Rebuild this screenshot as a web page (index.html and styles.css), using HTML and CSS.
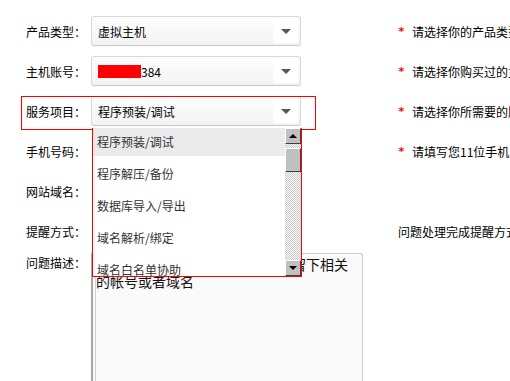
FILE: index.html
```html
<!DOCTYPE html>
<html lang="zh-CN">
  <head>
    <meta charset="UTF-8" />
    <meta name="viewport" content="width=device-width, initial-scale=1.0" />
    <title>提交工单</title>
    <link rel="stylesheet" href="styles.css">
  </head>
  <body>
    <div class="form">
      <div class="row">
        <label class="label">产品类型：</label>
        <div class="select">虚拟主机<span class="arrow"></span></div>
        <div class="hint"><span class="star">*</span>请选择你的产品类型</div>
      </div>
      <div class="row">
        <label class="label">主机账号：</label>
        <div class="select"><span class="masked"></span>384<span class="arrow"></span></div>
        <div class="hint"><span class="star">*</span>请选择你购买过的主机账号</div>
      </div>
      <div class="row active">
        <label class="label">服务项目：</label>
        <div class="select">程序预装/调试<span class="arrow"></span></div>
        <div class="hint"><span class="star">*</span>请选择你所需要的服务项目</div>

        <!-- open option list -->
        <div class="dropdown">
          <ul class="options">
            <li class="selected">程序预装/调试</li>
            <li>程序解压/备份</li>
            <li>数据库导入/导出</li>
            <li>域名解析/绑定</li>
            <li>域名白名单协助</li>
          </ul>
          <div class="scrollbar">
            <span class="btn up"></span>
            <span class="thumb"></span>
            <span class="btn down"></span>
          </div>
        </div>
      </div>
      <div class="row">
        <label class="label">手机号码：</label>
        <div class="field"></div>
        <div class="hint"><span class="star">*</span>请填写您11位手机号码</div>
      </div>
      <div class="row">
        <label class="label">网站域名：</label>
        <div class="field"></div>
      </div>
      <div class="row">
        <label class="label">提醒方式：</label>
        <div class="field"></div>
        <div class="hint">问题处理完成提醒方式</div>
      </div>
      <div class="row desc">
        <label class="label">问题描述：</label>
        <textarea class="textarea">请详细描述您所遇到的问题，并留下相关的帐号或者域名</textarea>
      </div>
    </div>
  </body>
</html>
```

FILE: styles.css
```css
html, body {
  margin: 0;
  padding: 0;
  background-color: #fff;
  overflow: hidden;
}
body {
  font-family: "Noto Sans CJK SC", "Noto Sans", sans-serif;
  font-size: 12px;
  color: #000;
}
.form {
  padding: 16px 0 0 26px;
}
.row {
  display: flex;
  align-items: center;
  height: 30px;
  margin-bottom: 10px;
  white-space: nowrap;
}
.row.active {
  position: relative;
}
.row.active::before {
  content: "";
  position: absolute;
  left: -5px;
  top: 0;
  width: 293px;
  height: 32px;
  border: 1px solid #f00;
  z-index: 2;
}
.label {
  width: 65px;
  flex-shrink: 0;
}
.select {
  position: relative;
  box-sizing: border-box;
  width: 210px;
  height: 30px;
  flex-shrink: 0;
  display: flex;
  align-items: center;
  padding-left: 6px;
  border: 1px solid #d8d8d8;
  border-bottom-color: #c8c8c8;
  border-radius: 3px;
  background: linear-gradient(#fdfdfd, #f3f3f3);
}
.arrow {
  position: absolute;
  right: 2px;
  top: 2px;
  width: 25px;
  height: 24px;
  border-radius: 2px;
  background-color: #fff;
}
.arrow::after {
  content: "";
  position: absolute;
  left: 8px;
  top: 10px;
  border-left: 5px solid transparent;
  border-right: 5px solid transparent;
  border-top: 5px solid #555;
}
.masked {
  display: inline-block;
  width: 43px;
  height: 13px;
  background-color: #f00;
}
.field {
  width: 210px;
  flex-shrink: 0;
}
.hint {
  margin-left: 97px;
  display: flex;
  align-items: center;
}
.star {
  color: #f00;
  font-family: "DejaVu Sans Mono", monospace;
  font-weight: bold;
  font-size: 11px;
  width: 14px;
  padding-left: 0;
  box-sizing: border-box;
}
.dropdown {
  position: absolute;
  left: 66px;
  top: 32px;
  width: 208px;
  height: 148px;
  border: 1px solid #f00;
  border-top: none;
  background-color: #fff;
  display: flex;
  z-index: 3;
  overflow: hidden;
}
.options {
  list-style-type: none;
  margin: 0;
  padding: 0;
  flex: 1;
}
.options li {
  height: 28px;
  line-height: 28px;
  margin-bottom: 4px;
  padding-left: 4px;
  color: #333;
}
.options li.selected {
  background-color: #ebebeb;
}
.scrollbar {
  width: 16px;
  display: flex;
  flex-direction: column;
  background-color: #fff;
  background-image: repeating-conic-gradient(#c8c8c8 0 25%, #fff 0 50%);
  background-size: 2px 2px;
}
.btn, .thumb {
  box-sizing: border-box;
  background-color: #c0c0c0;
  border: 1px solid;
  border-color: #fff #404040 #404040 #fff;
  position: relative;
}
.btn {
  height: 16px;
}
.btn::after {
  content: "";
  position: absolute;
  left: 3px;
  top: 5px;
  border-left: 4px solid transparent;
  border-right: 4px solid transparent;
}
.up::after {
  border-bottom: 4px solid #000;
}
.down::after {
  border-top: 4px solid #000;
}
.thumb {
  height: 24px;
  margin-top: 4px;
}
.down {
  margin-top: auto;
}
.row.desc {
  align-items: flex-start;
  height: auto;
  margin-top: -3px;
}
.row.desc .label {
  line-height: 20px;
}
.textarea {
  box-sizing: border-box;
  width: 272px;
  height: 160px;
  margin: 0;
  padding: 2px 4px 0 3px;
  border: 1px solid #ccc;
  border-left: 2px solid #a8a8a8;
  border-radius: 0 3px 0 0;
  background-color: #fafafa;
  background-image: linear-gradient(to right, transparent 2px, #cdd3de 2px, #cdd3de 3px, transparent 3px);
  font-family: "Noto Sans CJK SC", sans-serif;
  font-size: 14px;
  line-height: 17px;
  color: #111;
  resize: none;
}
```
